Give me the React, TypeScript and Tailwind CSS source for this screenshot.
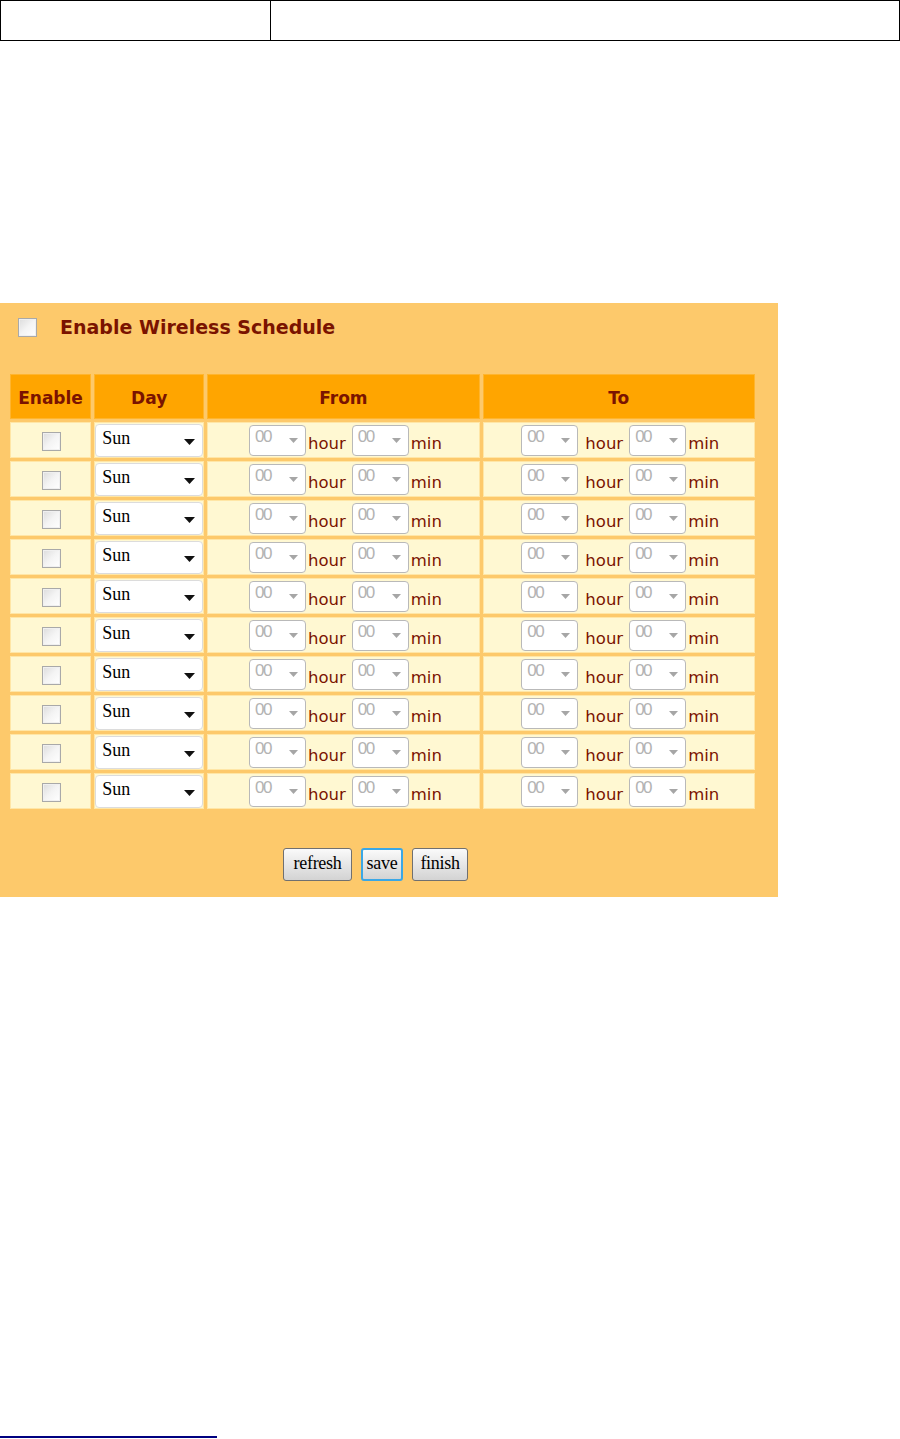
const rows = Array.from({ length: 10 }, (_, i) => i)

function Check({ className = '' }: { className?: string }) {
  return (
    <span
      className={`inline-block w-[19px] h-[19px] border border-[#a9a9a9] bg-gradient-to-br from-[#dcdcdc] via-[#f4f4f4] to-[#ffffff] shadow-[inset_0_0_0_1px_#f0f0f0] ${className}`}
    />
  )
}

function TimeSelect() {
  return (
    <div className="relative w-[57px] h-[31px] shrink-0 bg-white border border-[#b9b9b9] rounded-[4px]">
      <span className="absolute left-[5px] top-[1px] text-[17px] leading-[20px] text-[#b3b3b3] font-['Liberation_Sans',sans-serif] font-light tracking-[-1.5px]">
        00
      </span>
      <svg className="absolute right-[7px] top-[12px]" width="9" height="5" viewBox="0 0 9 5">
        <path d="M0 0h9L4.5 5z" fill="#a6a6a6" />
      </svg>
    </div>
  )
}

function DaySelect() {
  return (
    <div className="relative mx-auto w-[108px] h-[33px] bg-white border border-[#dcdcdc] rounded-[4px]">
      <span className="absolute left-[6px] top-[3px] text-[18px] leading-[20px] text-black font-['Liberation_Serif',serif]">
        Sun
      </span>
      <svg className="absolute right-[7px] top-[14px]" width="11" height="6" viewBox="0 0 11 6">
        <path d="M0 0h11L5.5 6z" fill="#111" />
      </svg>
    </div>
  )
}

function TimeGroup({ spaced }: { spaced?: boolean }) {
  return (
    <div className={`flex items-center justify-center ${spaced ? 'pl-[3px]' : 'pl-[4px]'}`}>
      <TimeSelect />
      <span className={`mt-[9px] text-[16.5px] leading-none text-[#7a1300] ${spaced ? 'ml-[7px] mr-[6px]' : 'ml-[2px] mr-[6px]'}`}>
        hour
      </span>
      <TimeSelect />
      <span className="mt-[9px] ml-[2px] text-[16.5px] leading-none text-[#7a1300]">min</span>
    </div>
  )
}

function Btn({ label, width, active }: { label: string; width: string; active?: boolean }) {
  return (
    <button
      className={`${width} h-[33px] pb-[4px] rounded-[3px] bg-gradient-to-b from-[#fafafa] to-[#d3d3d3] text-[18px] leading-none text-black font-['Liberation_Serif',serif] tracking-[-0.3px] ${
        active ? 'border-2 border-[#3aa7e6]' : 'border border-[#707070]'
      }`}
    >
      {label}
    </button>
  )
}

export default function App() {
  return (
    <div className="min-h-[1439px] flex flex-col bg-white font-['DejaVu_Sans',sans-serif]">
      <div className="flex h-[41px] border border-black">
        <div className="w-[270px] border-r border-black" />
        <div className="flex-1" />
      </div>

      <div className="mt-[262px] w-[778px] h-[594px] bg-[#fdc96b] flex flex-col">
        <div className="flex items-center h-[47px] pt-[1px] pl-[18px]">
          <Check />
          <span className="ml-[23px] text-[19px] font-bold text-[#7a1300]">Enable Wireless Schedule</span>
        </div>

        <table className="ml-[7px] mt-[21px] border-separate border-spacing-[3px] w-[751px]">
          <thead>
            <tr className="h-[45px] text-[17px] font-bold text-[#7a1300]">
              <th className="w-[81px] pt-[4px] bg-[#ffa500] border border-[#ffb52e]">Enable</th>
              <th className="w-[110px] pt-[4px] bg-[#ffa500] border border-[#ffb52e]">Day</th>
              <th className="w-[272px] pt-[4px] bg-[#ffa500] border border-[#ffb52e]">From</th>
              <th className="w-[272px] pt-[4px] bg-[#ffa500] border border-[#ffb52e]">To</th>
            </tr>
          </thead>
          <tbody>
            {rows.map(i => (
              <tr key={i} className="h-[36px]">
                <td className="bg-[#fff8d2] border border-[#ffe6a6] text-center p-0">
                  <Check className="align-middle mt-[2px] ml-[2px]" />
                </td>
                <td className="bg-[#fff8d2] border border-[#ffe6a6] p-0">
                  <DaySelect />
                </td>
                <td className="bg-[#fff8d2] border border-[#ffe6a6] p-0">
                  <TimeGroup />
                </td>
                <td className="bg-[#fff8d2] border border-[#ffe6a6] p-0">
                  <TimeGroup spaced />
                </td>
              </tr>
            ))}
          </tbody>
        </table>

        <div className="flex gap-[9px] pl-[283px] mt-[36px]">
          <Btn label="refresh" width="w-[69px]" />
          <Btn label="save" width="w-[42px]" active />
          <Btn label="finish" width="w-[56px]" />
        </div>
      </div>

      <div className="mt-auto mb-[1px] w-[217px] h-[2px] bg-[#000080]" />
    </div>
  )
}
